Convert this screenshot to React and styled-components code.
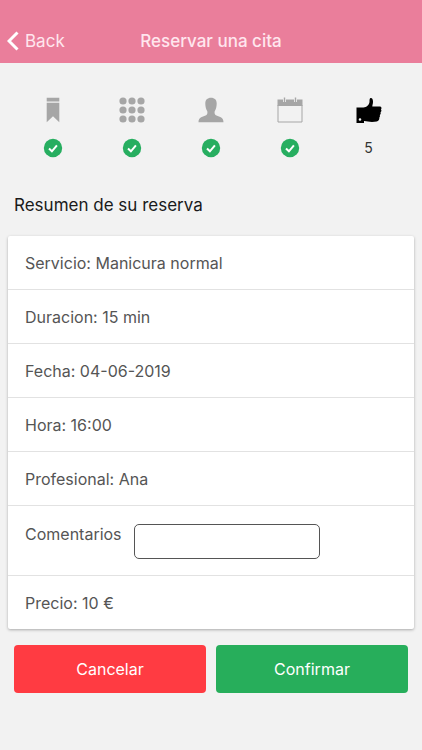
import React, { useState } from 'react'
import styled, { createGlobalStyle } from 'styled-components';

const GlobalStyle = createGlobalStyle`
  body {
    margin: 0;
    background-color: #f2f2f2;
    font-family: Inter, "Liberation Sans", sans-serif;
  }
`;

const details = [
  { label: 'Servicio', value: 'Manicura normal' },
  { label: 'Duracion', value: '15 min' },
  { label: 'Fecha', value: '04-06-2019' },
  { label: 'Hora', value: '16:00' },
  { label: 'Profesional', value: 'Ana' },
]

const BookmarkIcon = () => (
  <StepIcon viewBox="0 0 26 26">
    <path d="M6.700.8h12.600v3.800H6.700zM6.700 5.800h12.600v19.400L13 19.200l-6.300 6z" />
  </StepIcon>
)

const GridIcon = () => (
  <StepIcon viewBox="0 0 26 26">
    {[4, 13, 22].map((cy) =>
      [4, 13, 22].map((cx) => <circle key={`${cx}-${cy}`} cx={cx} cy={cy} r="3.600" />)
    )}
  </StepIcon>
)

const PersonIcon = () => (
  <StepIcon viewBox="0 0 26 26">
    <path d="M13 .8c3.700 0 5.700 2.200 5.700 5.700 0 3.200-.8 6-2 7.800-.3 1.700-.2 3.200 1.200 4 2.900 1.500 7.600 1.600 7.600 7H.5c0-5.400 4.700-5.500 7.600-7 1.400-.8 1.500-2.300 1.200-4-1.200-1.800-2-4.600-2-7.800 0-3.500 2-5.700 5.700-5.700z" />
  </StepIcon>
)

const CalendarIcon = () => (
  <StepIcon viewBox="0 0 26 26">
    <path d="M.5 2.500h25V9H.5z" />
    <path d="M1 8v17h24V8" fill="none" stroke="currentColor" />
    <path d="M7.500 1v4M18.500 1v4" stroke="#f2f2f2" strokeWidth="3" />
    <path d="M7.500.5v4.500M18.500.5v4.500" stroke="currentColor" strokeWidth="1.400" />
  </StepIcon>
)

const ThumbIcon = () => (
  <StepIcon viewBox="0 0 26 26">
    <path
      fillRule="evenodd"
      d="M.5 10.500h7c3-.3 5.700-2.600 6-5.500 0-2 .1-3.700 1-3.900 1.800-.3 2.600 1.800 2.500 4 0 1.600-.6 3-.7 4.400h7.200c1.600 0 2.300 1 1.900 2.100-.1.700-.5 1-.5 1 .8.900.7 2-.4 2.700.5 1 .2 2.200-.7 2.800.3 1 .1 1.900-.5 2.500.3 2-.6 3.400-2.600 3.900-3.600.8-9.200.4-12.200-.4H8v2H.5zM4 21.200a1.300 1.300 0 1 0 0 2.600 1.300 1.300 0 1 0 0-2.600z"
    />
  </StepIcon>
)

const CheckBadge = () => (
  <Badge viewBox="0 0 20 20">
    <circle cx="10" cy="10" r="9.200" fill="#27ae60" />
    <path d="M6 10.500l2.900 2.800 5-6" fill="none" stroke="#fff" strokeWidth="2" />
  </Badge>
)

const steps = [
  { name: 'Servicio', Icon: BookmarkIcon, done: true },
  { name: 'Categoria', Icon: GridIcon, done: true },
  { name: 'Profesional', Icon: PersonIcon, done: true },
  { name: 'Fecha', Icon: CalendarIcon, done: true },
  { name: 'Resumen', Icon: ThumbIcon, done: false },
]

const App = () => {
  const [comments, setComments] = useState('')

  return (
    <>
      <GlobalStyle />
      <Header>
        <BackLink href="#">
          <BackArrow viewBox="0 0 12 20">
            <path d="M10.500 1.500L2 10l8.500 8.500" fill="none" stroke="currentColor" strokeWidth="3" />
          </BackArrow>
          Back
        </BackLink>
        <HeaderTitle>Reservar una cita</HeaderTitle>
      </Header>

      <main>
        <Steps>
          {steps.map(({ name, Icon, done }, index) => (
            <Step key={name} $active={!done}>
              <Icon />
              {done ? <CheckBadge /> : <StepNumber>{index + 1}</StepNumber>}
            </Step>
          ))}
        </Steps>

        <SectionTitle>Resumen de su reserva</SectionTitle>

        <Card>
          {details.map(({ label, value }) => (
            <Row key={label}>{label}: {value}</Row>
          ))}
          <CommentsRow>
            <label htmlFor="comments">Comentarios</label>
            <CommentsInput
              type="text"
              id="comments"
              value={comments}
              onChange={(e) => setComments(e.target.value)}
            />
          </CommentsRow>
          <Row>Precio: 10 €</Row>
        </Card>

        <Actions>
          <ActionButton type="button" $color="#ff3b42">Cancelar</ActionButton>
          <ActionButton type="button" $color="#27ae5b">Confirmar</ActionButton>
        </Actions>
      </main>
    </>
  );
}

const Header = styled.header`
  display: grid;
  grid-template-columns: 1fr auto 1fr;
  align-items: center;
  padding: 30px 7px 11px;
  background-color: #ea7e9b;
  color: #fff;
  line-height: 22px;
`;

const BackLink = styled.a`
  display: flex;
  align-items: center;
  gap: 6px;
  color: #ffe6ee;
  font-size: 17px;
  text-decoration: none;
`;

const BackArrow = styled.svg`
  width: 12px;
  height: 20px;
  color: #fff;
`;

const HeaderTitle = styled.h1`
  margin: 0;
  color: #ffe6ee;
  font-size: 17px;
  font-weight: 500;
`;

const Steps = styled.ol`
  display: grid;
  grid-template-columns: repeat(5, 1fr);
  margin: 0;
  padding: 34px 14px 0;
  list-style: none;
`;

const Step = styled.li`
  display: flex;
  flex-direction: column;
  align-items: center;
  gap: 15px;
  color: ${({ $active }) => ($active ? '#000' : '#a6a6a6')};
`;

const StepIcon = styled.svg`
  width: 26px;
  height: 26px;
  fill: currentColor;
`;

const Badge = styled.svg`
  width: 20px;
  height: 20px;
`;

const StepNumber = styled.span`
  color: #333;
  font-size: 14px;
  line-height: 20px;
`;

const SectionTitle = styled.h2`
  margin: 36px 14px 20px;
  color: #1a1a1a;
  font-size: 17px;
  font-weight: 400;
  line-height: 22px;
`;

const Card = styled.ul`
  margin: 0 8px;
  padding: 0;
  border-radius: 2px;
  background-color: #fff;
  box-shadow: 0 1px 3px rgba(0, 0, 0, 0.3);
  list-style: none;
`;

const Row = styled.li`
  padding: 17px 17px 15px;
  border-bottom: 1px solid #e2e2e2;
  color: #555;
  font-size: 16px;
  line-height: 21px;

  &:last-child {
    border-bottom: none;
  }
`;

const CommentsRow = styled(Row)`
  display: flex;
  align-items: flex-start;
  gap: 12px;
  padding: 18px 17px 16px;
`;

const CommentsInput = styled.input`
  box-sizing: border-box;
  width: 50%;
  height: 35px;
  padding: 0 8px;
  border: 1px solid #555;
  border-radius: 5px;
  background-color: #fff;
  color: inherit;
  font: inherit;
`;

const Actions = styled.div`
  display: grid;
  grid-template-columns: 1fr 1fr;
  gap: 10px;
  padding: 16px 14px;
`;

const ActionButton = styled.button`
  padding: 13px 16px;
  border: none;
  border-radius: 4px;
  background-color: ${({ $color }) => $color};
  color: #fff;
  font-family: inherit;
  font-size: 16px;
  line-height: 22px;
  cursor: pointer;
`;

export default App
